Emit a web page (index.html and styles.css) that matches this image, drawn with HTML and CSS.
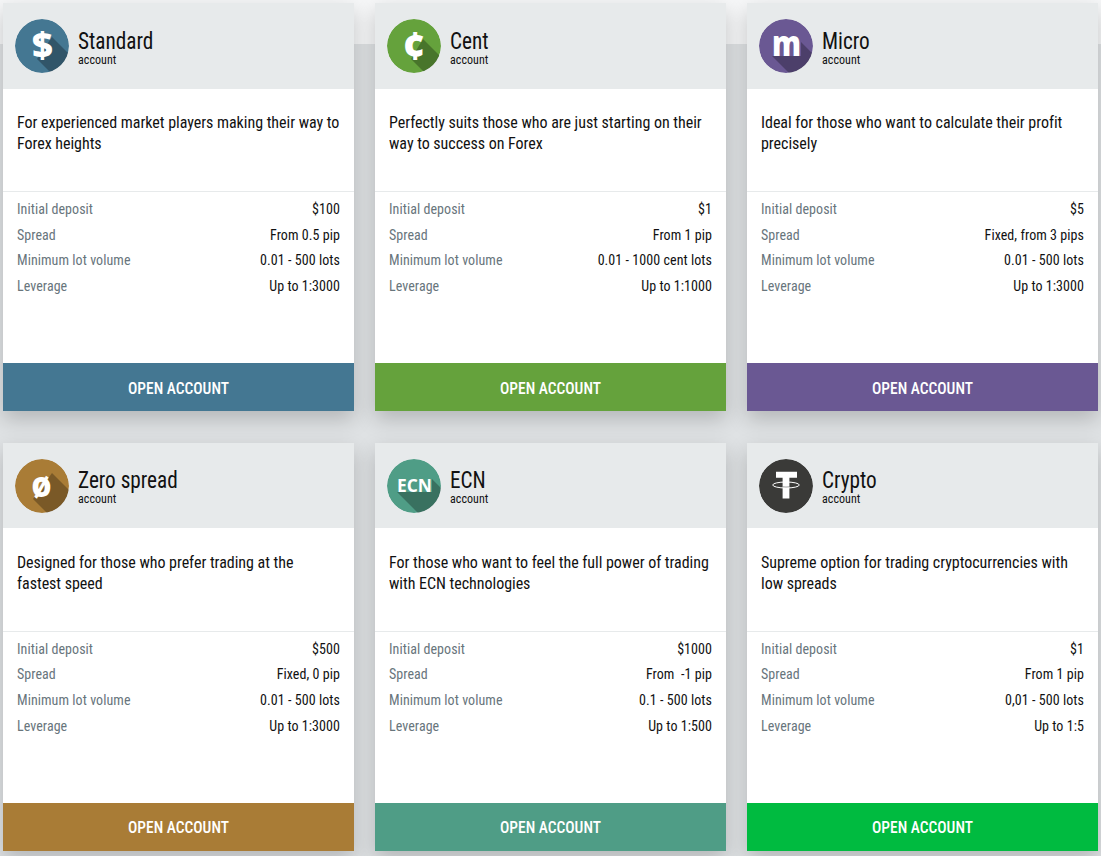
FILE: index.html
```html
<!DOCTYPE html>
<html lang="en">
<head>
    <meta charset="UTF-8">
    <meta name="viewport" content="width=device-width, initial-scale=1.0">
    <title>Account types</title>
    <link rel="stylesheet" href="styles.css">
</head>
<body>
    <div class="accounts">

        <div class="card card-standard">
            <div class="card-head">
                <svg class="logo" viewBox="0 0 54 54">
                    <circle cx="27" cy="27" r="27" class="logo-bg"/>
                    <path d="M37 18L56 37V56H38L22 40Z" class="logo-shade"/>
                    <text x="27.500" y="39" class="logo-glyph logo-dollar">$</text>
                </svg>
                <div class="card-name">
                    <div class="name">Standard</div>
                    <div class="sub">account</div>
                </div>
            </div>
            <p class="desc">For experienced market players making their way to Forex heights</p>
            <div class="specs">
                <div class="spec"><span>Initial deposit</span><b>$100</b></div>
                <div class="spec"><span>Spread</span><b>From 0.5 pip</b></div>
                <div class="spec"><span>Minimum lot volume</span><b>0.01 - 500 lots</b></div>
                <div class="spec"><span>Leverage</span><b>Up to 1:3000</b></div>
            </div>
            <a class="open" href="#"><span>OPEN ACCOUNT</span></a>
        </div>

        <div class="card card-cent">
            <div class="card-head">
                <svg class="logo" viewBox="0 0 54 54">
                    <circle cx="27" cy="27" r="27" class="logo-bg"/>
                    <path d="M36 20L56 40V56H40L24 40Z" class="logo-shade"/>
                    <text x="27" y="40.500" class="logo-glyph logo-cent">¢</text>
                </svg>
                <div class="card-name">
                    <div class="name">Cent</div>
                    <div class="sub">account</div>
                </div>
            </div>
            <p class="desc">Perfectly suits those who are just starting on their way to success on Forex</p>
            <div class="specs">
                <div class="spec"><span>Initial deposit</span><b>$1</b></div>
                <div class="spec"><span>Spread</span><b>From 1 pip</b></div>
                <div class="spec"><span>Minimum lot volume</span><b>0.01 - 1000 cent lots</b></div>
                <div class="spec"><span>Leverage</span><b>Up to 1:1000</b></div>
            </div>
            <a class="open" href="#"><span>OPEN ACCOUNT</span></a>
        </div>

        <div class="card card-micro">
            <div class="card-head">
                <svg class="logo" viewBox="0 0 54 54">
                    <circle cx="27" cy="27" r="27" class="logo-bg"/>
                    <path d="M13 37L33 57H56V37L42 23V37Z" class="logo-shade"/>
                    <text x="27.500" y="37" class="logo-glyph logo-m" textLength="29" lengthAdjust="spacingAndGlyphs">m</text>
                </svg>
                <div class="card-name">
                    <div class="name">Micro</div>
                    <div class="sub">account</div>
                </div>
            </div>
            <p class="desc">Ideal for those who want to calculate their profit precisely</p>
            <div class="specs">
                <div class="spec"><span>Initial deposit</span><b>$5</b></div>
                <div class="spec"><span>Spread</span><b>Fixed, from 3 pips</b></div>
                <div class="spec"><span>Minimum lot volume</span><b>0.01 - 500 lots</b></div>
                <div class="spec"><span>Leverage</span><b>Up to 1:3000</b></div>
            </div>
            <a class="open" href="#"><span>OPEN ACCOUNT</span></a>
        </div>

        <div class="card card-zero">
            <div class="card-head">
                <svg class="logo" viewBox="0 0 54 54">
                    <circle cx="27" cy="27" r="27" class="logo-bg"/>
                    <path d="M37 14L57 34V56H34L18 40Z" class="logo-shade"/>
                    <text x="26.500" y="38" class="logo-glyph logo-zero" textLength="20" lengthAdjust="spacingAndGlyphs">ø</text>
                </svg>
                <div class="card-name">
                    <div class="name">Zero spread</div>
                    <div class="sub">account</div>
                </div>
            </div>
            <p class="desc">Designed for those who prefer trading at the fastest speed</p>
            <div class="specs">
                <div class="spec"><span>Initial deposit</span><b>$500</b></div>
                <div class="spec"><span>Spread</span><b>Fixed, 0 pip</b></div>
                <div class="spec"><span>Minimum lot volume</span><b>0.01 - 500 lots</b></div>
                <div class="spec"><span>Leverage</span><b>Up to 1:3000</b></div>
            </div>
            <a class="open" href="#"><span>OPEN ACCOUNT</span></a>
        </div>

        <div class="card card-ecn">
            <div class="card-head">
                <svg class="logo" viewBox="0 0 54 54">
                    <circle cx="27" cy="27" r="27" class="logo-bg"/>
                    <path d="M10 33L33 56H56V31L45 20V33Z" class="logo-shade"/>
                    <text x="27.500" y="33" class="logo-glyph logo-ecn" textLength="35" lengthAdjust="spacingAndGlyphs">ECN</text>
                </svg>
                <div class="card-name">
                    <div class="name">ECN</div>
                    <div class="sub">account</div>
                </div>
            </div>
            <p class="desc">For those who want to feel the full power of trading with ECN technologies</p>
            <div class="specs">
                <div class="spec"><span>Initial deposit</span><b>$1000</b></div>
                <div class="spec"><span>Spread</span><b>From &nbsp;-1 pip</b></div>
                <div class="spec"><span>Minimum lot volume</span><b>0.1 - 500 lots</b></div>
                <div class="spec"><span>Leverage</span><b>Up to 1:500</b></div>
            </div>
            <a class="open" href="#"><span>OPEN ACCOUNT</span></a>
        </div>

        <div class="card card-crypto">
            <div class="card-head">
                <svg class="logo" viewBox="0 0 54 54">
                    <circle cx="27" cy="27" r="27" class="logo-bg"/>
                    <path d="M17 12.700H38V18.700H30.400V39.400H23.600V18.700H17Z" class="logo-t"/>
                    <ellipse cx="27" cy="26" rx="13.300" ry="3" class="logo-ring"/>
                    <path d="M23.600 27.800Q27 28.300 30.400 27.800" class="logo-ring-back"/>
                </svg>
                <div class="card-name">
                    <div class="name">Crypto</div>
                    <div class="sub">account</div>
                </div>
            </div>
            <p class="desc">Supreme option for trading cryptocurrencies with low spreads</p>
            <div class="specs">
                <div class="spec"><span>Initial deposit</span><b>$1</b></div>
                <div class="spec"><span>Spread</span><b>From 1 pip</b></div>
                <div class="spec"><span>Minimum lot volume</span><b>0,01 - 500 lots</b></div>
                <div class="spec"><span>Leverage</span><b>Up to 1:5</b></div>
            </div>
            <a class="open" href="#"><span>OPEN ACCOUNT</span></a>
        </div>

    </div>
</body>
</html>
```

FILE: styles.css
```css
html, body {
    margin: 0;
    padding: 0;
}
body {
    height: 856px;
    overflow: hidden;
    font-family: Roboto, Arial, sans-serif;
    font-stretch: condensed;
    color: #111;
    background: linear-gradient(#f6f7f8 0, #f6f7f8 44px, #dfe2e4 44px);
}
.accounts {
    display: grid;
    grid-template-columns: repeat(3, 351px);
    grid-auto-rows: 407.6px;
    column-gap: 21px;
    row-gap: 32px;
    padding: 3.4px 0 0 3px;
}
.card {
    display: flex;
    flex-direction: column;
    background-color: #fff;
    box-shadow: 0 8px 20px rgba(0, 0, 0, 0.2);
}
.card-head {
    display: flex;
    align-items: center;
    gap: 9px;
    height: 85.2px;
    padding: 0 12px;
    background-color: #e7eaeb;
}
.logo {
    width: 54px;
    height: 54px;
    flex: none;
    border-radius: 50%;
}
.logo-shade {
    fill: rgba(0, 0, 0, 0.28);
}
.logo-glyph {
    fill: #fff;
    font-family: "Open Sans", sans-serif;
    font-stretch: normal;
    font-weight: 800;
    text-anchor: middle;
}
.logo-dollar {
    font-size: 36px;
}
.logo-cent {
    font-size: 38px;
}
.logo-zero {
    font-size: 35px;
}
.logo-m {
    font-size: 36px;
}
.logo-ecn {
    font-size: 18px;
    font-weight: 700;
}
.logo-t {
    fill: #fff;
}
.logo-ring {
    fill: none;
    stroke: #fff;
    stroke-width: 1;
}
.logo-ring-back {
    fill: none;
    stroke: #3a3a38;
    stroke-width: 0.8;
    opacity: 0.6;
}
.card-name {
    padding-top: 1.4px;
}
.name {
    font-size: 24px;
    line-height: 26px;
    transform: scaleX(0.885);
    transform-origin: left;
}
.sub {
    font-size: 12px;
    line-height: 12px;
    letter-spacing: 0.05px;
}
.desc {
    height: 102.4px;
    margin: 0;
    padding: 23.4px 14px 0;
    box-sizing: border-box;
    font-size: 16px;
    line-height: 21px;
    letter-spacing: -0.03px;
}
.specs {
    flex: 1;
    padding: 5px 14px 0;
    border-top: 1px solid #e7eaeb;
}
.spec {
    display: flex;
    justify-content: space-between;
    font-size: 14px;
    line-height: 25.67px;
    letter-spacing: 0.06px;
    color: #68757c;
}
.spec b {
    font-weight: 400;
    color: #111;
}
.open {
    display: block;
    height: 48px;
    box-sizing: border-box;
    padding-top: 0.7px;
    line-height: 49px;
    text-align: center;
    text-decoration: none;
    font-size: 17px;
    font-weight: 500;
    color: #fff;
}
.open span {
    display: inline-block;
    transform: scaleX(0.91);
}
.card-standard .logo-bg { fill: #447792; }
.card-standard .open { background-color: #447792; }
.card-cent .logo-bg { fill: #65a23c; }
.card-cent .open { background-color: #65a23c; }
.card-micro .logo-bg { fill: #6a5893; }
.card-micro .open { background-color: #6a5893; }
.card-zero .logo-bg { fill: #a97c36; }
.card-zero .open { background-color: #a97c36; }
.card-ecn .logo-bg { fill: #4f9d86; }
.card-ecn .open { background-color: #4f9d86; }
.card-crypto .logo-bg { fill: #3a3a38; }
.card-crypto .open { background-color: #00bb40; }
```
